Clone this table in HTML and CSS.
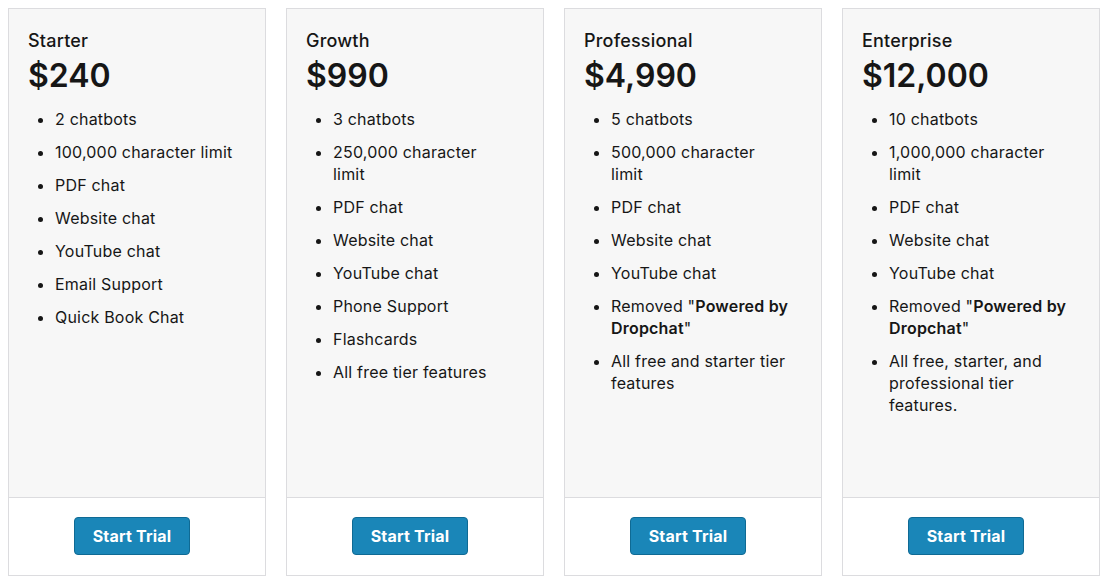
FILE: index.html
```html
<!DOCTYPE html>
<html lang="en">
<head>
    <meta charset="UTF-8">
    <meta name="viewport" content="width=device-width, initial-scale=1.0">
    <title>Pricing</title>
    <link rel="stylesheet" href="styles.css">
</head>
<body>
    <div class="plans">
        <!-- Starter -->
        <div class="plan">
            <div class="plan-body">
                <h3 class="plan-name">Starter</h3>
                <div class="plan-price">$240</div>
                <ul class="plan-features">
                    <li>2 chatbots</li>
                    <li>100,000 character limit</li>
                    <li>PDF chat</li>
                    <li>Website chat</li>
                    <li>YouTube chat</li>
                    <li>Email Support</li>
                    <li>Quick Book Chat</li>
                </ul>
            </div>
            <div class="plan-footer">
                <button class="trial-btn">Start Trial</button>
            </div>
        </div>

        <!-- Growth -->
        <div class="plan">
            <div class="plan-body">
                <h3 class="plan-name">Growth</h3>
                <div class="plan-price">$990</div>
                <ul class="plan-features">
                    <li>3 chatbots</li>
                    <li>250,000 character limit</li>
                    <li>PDF chat</li>
                    <li>Website chat</li>
                    <li>YouTube chat</li>
                    <li>Phone Support</li>
                    <li>Flashcards</li>
                    <li>All free tier features</li>
                </ul>
            </div>
            <div class="plan-footer">
                <button class="trial-btn">Start Trial</button>
            </div>
        </div>

        <!-- Professional -->
        <div class="plan">
            <div class="plan-body">
                <h3 class="plan-name">Professional</h3>
                <div class="plan-price">$4,990</div>
                <ul class="plan-features">
                    <li>5 chatbots</li>
                    <li>500,000 character limit</li>
                    <li>PDF chat</li>
                    <li>Website chat</li>
                    <li>YouTube chat</li>
                    <li>Removed "<strong>Powered by Dropchat</strong>"</li>
                    <li>All free and starter tier features</li>
                </ul>
            </div>
            <div class="plan-footer">
                <button class="trial-btn">Start Trial</button>
            </div>
        </div>

        <!-- Enterprise -->
        <div class="plan">
            <div class="plan-body">
                <h3 class="plan-name">Enterprise</h3>
                <div class="plan-price">$12,000</div>
                <ul class="plan-features">
                    <li>10 chatbots</li>
                    <li>1,000,000 character limit</li>
                    <li>PDF chat</li>
                    <li>Website chat</li>
                    <li>YouTube chat</li>
                    <li>Removed "<strong>Powered by Dropchat</strong>"</li>
                    <li>All free, starter, and professional tier features.</li>
                </ul>
            </div>
            <div class="plan-footer">
                <button class="trial-btn">Start Trial</button>
            </div>
        </div>
    </div>
</body>
</html>
```

FILE: styles.css
```css
body {
    font-family: Inter, "Noto Sans", Arial, sans-serif;
    background: #ffffff;
    color: #161616;
    margin: 0;
    padding: 8px;
}
.plans {
    display: flex;
    gap: 20px;
}
.plan {
    width: 258px;
    height: 568px;
    box-sizing: border-box;
    border: 1px solid #dcdcdf;
    display: flex;
    flex-direction: column;
}
.plan-body {
    flex: 1;
    background: #f7f7f7;
    padding: 20px 19px 0 19px;
    border-bottom: 1px solid #dcdcdf;
}
.plan-name {
    margin: 0;
    font-size: 18px;
    line-height: 24px;
    font-weight: 500;
    letter-spacing: 0.2px;
}
.plan-price {
    font-size: 32px;
    line-height: 40px;
    font-weight: 600;
    margin-top: 3px;
}
.plan-features {
    margin: 12px 0 0 0;
    padding-left: 27px;
    font-size: 16px;
    line-height: 22px;
    letter-spacing: 0.2px;
}
.plan-features li {
    margin-bottom: 11px;
    padding-right: 11px;
}
.plan-features strong {
    font-weight: 600;
}
.plan-footer {
    height: 77px;
    background: #ffffff;
    display: flex;
    align-items: center;
    justify-content: center;
}
.trial-btn {
    width: 116px;
    height: 38px;
    margin: 0 10px 2px 0;
    background: #1a86b8;
    color: #ffffff;
    border: 1px solid #0f6a94;
    border-radius: 4px;
    font-family: inherit;
    font-size: 16px;
    font-weight: 700;
    letter-spacing: 0.2px;
    cursor: pointer;
}
.trial-btn:hover {
    background: #157aa8;
}
```
